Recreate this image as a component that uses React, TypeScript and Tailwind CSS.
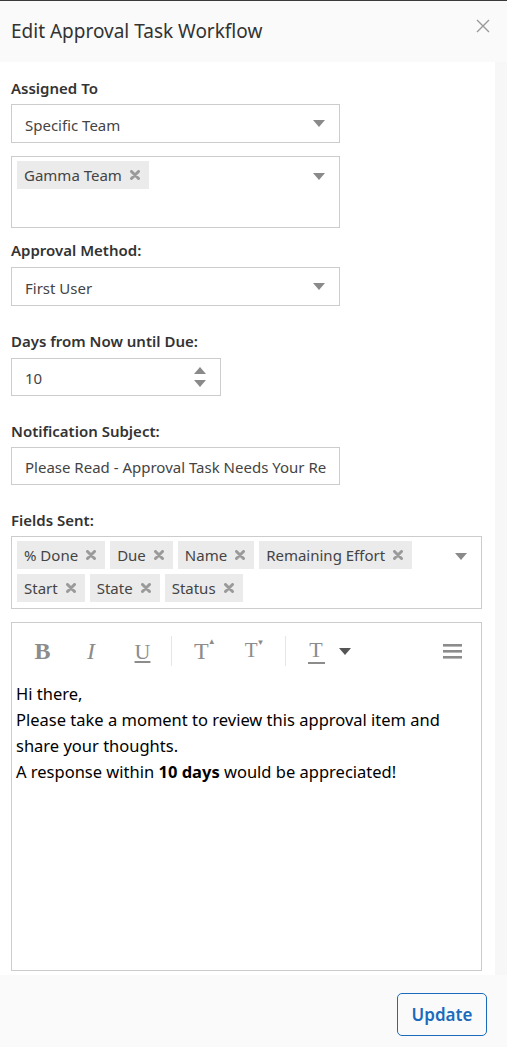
import React from "react";

const FONT = { fontFamily: '"Noto Sans", "Open Sans", sans-serif' };

function Caret({ className = "" }: { className?: string }) {
  return (
    <svg width="12" height="7" viewBox="0 0 12 7" className={className}>
      <path d="M0 0 L12 0 L6 7 Z" fill="#8a8a8a" />
    </svg>
  );
}

function TagX() {
  return (
    <svg width="10" height="10" viewBox="0 0 10 10" className="ml-[8px] shrink-0">
      <path d="M1.5 1.5 L8.5 8.5 M8.5 1.5 L1.5 8.5" stroke="#9a9a9a" strokeWidth="3" strokeLinecap="round" />
    </svg>
  );
}

function Tag({ label }: { label: string }) {
  return (
    <span className="inline-flex items-center h-[28px] bg-[#ebebeb] pl-[7px] pr-[9px] text-[15px] text-[#444]">
      <span className="pt-[1px]">{label}</span>
      <TagX />
    </span>
  );
}

function Label({ children, className = "" }: { children: React.ReactNode; className?: string }) {
  return <div className={`text-[15px] font-semibold leading-[20px] text-[#333] ${className}`}>{children}</div>;
}

function Select({ value, className = "" }: { value: string; className?: string }) {
  return (
    <div className={`flex items-center justify-between h-[39px] w-[329px] border border-[#cccccc] pl-[13px] pr-[14px] text-[15px] text-[#444] ${className}`}>
      <span className="pt-[3px]">{value}</span>
      <Caret />
    </div>
  );
}

function ToolSep() {
  return <div className="w-px h-[30px] bg-[#e6e6e6]" />;
}

export default function App() {
  const fields = ["% Done", "Due", "Name", "Remaining Effort", "Start", "State", "Status"];
  return (
    <div className="w-[507px] h-[1047px] flex flex-col bg-[#f9f9f9] border-t border-[#3a3a3a] overflow-hidden" style={FONT}>
      <div className="h-[61px] shrink-0 flex items-center justify-between pl-[11px] pr-[17px] bg-[#fafafa]">
        <h1 className="text-[19px] text-[#333] leading-[28px] -mt-[1px]">Edit Approval Task Workflow</h1>
        <svg width="14" height="14" viewBox="0 0 14 14" className="-mt-[12px]">
          <path d="M1 1 L13 13 M13 1 L1 13" stroke="#9a9a9a" strokeWidth="1.4" />
        </svg>
      </div>

      <div className="flex flex-1 min-h-0">
        <div className="w-[495px] bg-white flex flex-col pl-[11px] pt-[16px]">
          <Label>Assigned To</Label>
          <Select value="Specific Team" className="mt-[6px]" />
          <div className="mt-[13px] h-[72px] w-[329px] border border-[#cccccc] flex items-start justify-between pl-[5px] pt-[4px] pr-[14px]">
            <Tag label="Gamma Team" />
            <Caret className="mt-[12px]" />
          </div>

          <Label className="mt-[12px]">Approval Method:</Label>
          <Select value="First User" className="mt-[7px] h-[38px]" />

          <Label className="mt-[25px]">Days from Now until Due:</Label>
          <div className="mt-[7px] flex items-center justify-between h-[38px] w-[210px] border border-[#cccccc] pl-[13px] pr-[14px] text-[15px] text-[#444]">
            <span className="pt-[3px]">10</span>
            <svg width="12" height="20" viewBox="0 0 12 20">
              <path d="M0 7 L12 7 L6 0 Z" fill="#8a8a8a" />
              <path d="M0 13 L12 13 L6 20 Z" fill="#8a8a8a" />
            </svg>
          </div>

          <Label className="mt-[25px]">Notification Subject:</Label>
          <div className="mt-[6px] flex items-center h-[38px] w-[329px] border border-[#cccccc] pl-[13px] pr-[14px] text-[15px] text-[#444] overflow-hidden whitespace-nowrap">
            <span className="pt-[3px]">Please Read - Approval Task Needs Your Re</span>
          </div>

          <Label className="mt-[25px]">Fields Sent:</Label>
          <div className="mt-[6px] w-[471px] h-[73px] border border-[#cccccc] flex items-start justify-between pl-[5px] pt-[4px] pr-[14px]">
            <div className="flex flex-wrap gap-[5px] w-[410px]">
              {fields.map((f) => (
                <Tag key={f} label={f} />
              ))}
            </div>
            <Caret className="mt-[12px]" />
          </div>

          <div className="mt-[13px] w-[471px] h-[349px] border border-[#cccccc] flex flex-col">
            <div className="flex items-center h-[56px] pl-[20px] pr-[19px] text-[#8c8c8c]" style={{ fontFamily: '"Liberation Serif", serif' }}>
              <span className="text-[24px] font-bold w-[21px] text-center">B</span>
              <span className="text-[24px] italic ml-[31px] w-[14px] text-center">I</span>
              <span className="text-[22px] underline ml-[36px] w-[17px] text-center">U</span>
              <div className="ml-[20px]"><ToolSep /></div>
              <span className="ml-[22px] relative text-[24px]">
                T<span className="absolute -right-[7px] top-[3px] text-[8px]">▲</span>
              </span>
              <span className="ml-[36px] relative text-[21px]">
                T<span className="absolute -right-[7px] top-[2px] text-[8px]">▼</span>
              </span>
              <div className="ml-[27px]"><ToolSep /></div>
              <span className="ml-[22px] flex flex-col items-center leading-none">
                <span className="text-[22px]">T</span>
                <span className="w-[17px] h-[2px] bg-[#8c8c8c] mt-[1px]" />
              </span>
              <svg width="12" height="7" viewBox="0 0 12 7" className="ml-[14px]">
                <path d="M0 0 L12 0 L6 7 Z" fill="#555" />
              </svg>
              <div className="flex-1" />
              <svg width="19" height="15" viewBox="0 0 19 15">
                <rect x="0" y="0" width="19" height="2.6" fill="#8c8c8c" />
                <rect x="0" y="6" width="19" height="2.6" fill="#8c8c8c" />
                <rect x="0" y="12" width="19" height="2.6" fill="#8c8c8c" />
              </svg>
            </div>
            <div className="px-[4px] pt-[2px] text-[16.5px] leading-[26px] text-black">
              <div>Hi there,</div>
              <div>Please take a moment to review this approval item and share your thoughts.</div>
              <div>
                A response within <b>10 days</b> would be appreciated!
              </div>
            </div>
          </div>
        </div>
        <div className="flex-1 bg-[#f7f7f7]" />
      </div>

      <div className="h-[72px] shrink-0 flex items-start justify-end pt-[18px] pr-[20px] bg-[#fafafa]">
        <button className="w-[90px] h-[43px] border border-[#1a6bbd] rounded-[5px] text-[#1a6bbd] text-[17px] font-semibold">
          Update
        </button>
      </div>
    </div>
  );
}
